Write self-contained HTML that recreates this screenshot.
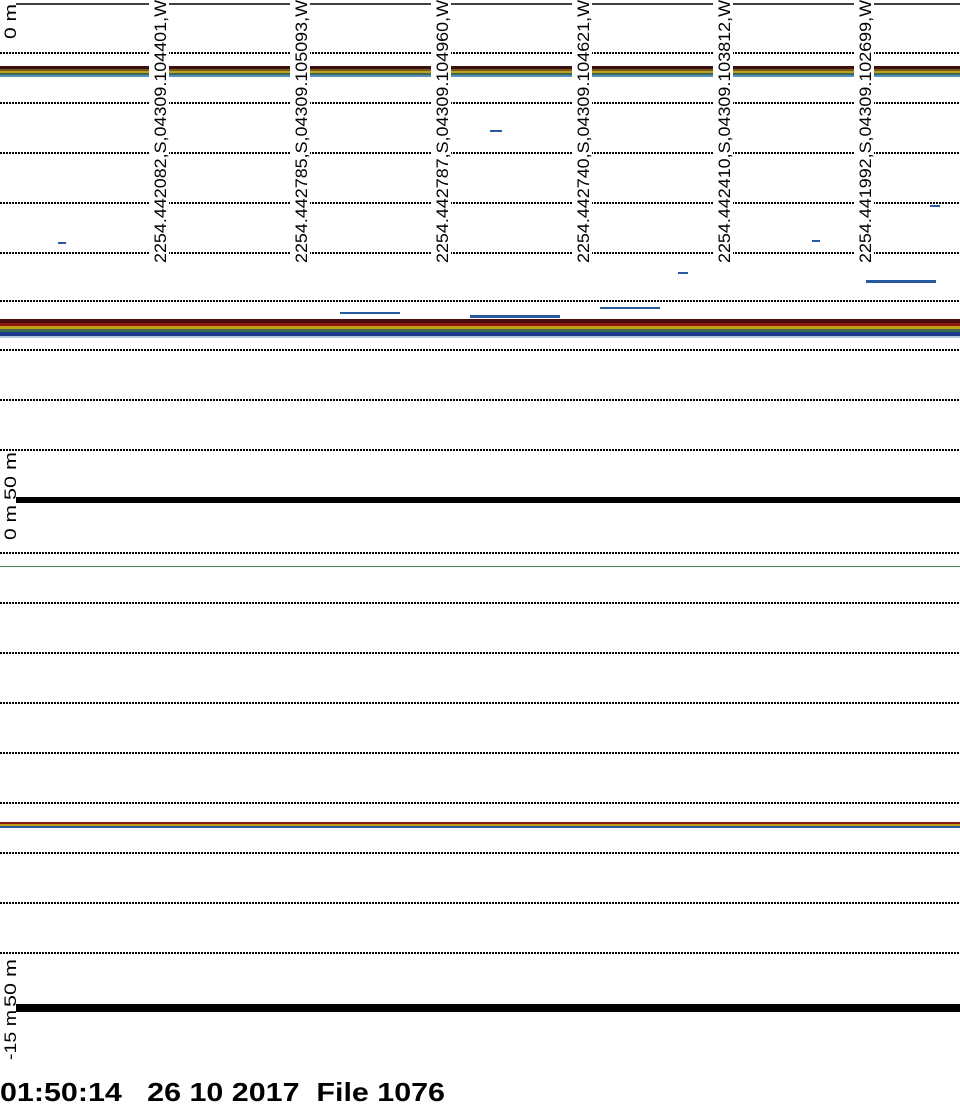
<!DOCTYPE html>
<html><head><meta charset="utf-8"><style>
html,body{margin:0;padding:0;background:#fff;width:960px;height:1108px;overflow:hidden}
svg{display:block}
text{font-family:"Liberation Sans",sans-serif}
</style></head><body>
<svg width="960" height="1108" viewBox="0 0 960 1108" xmlns="http://www.w3.org/2000/svg">
<defs>
<g id="dl"><line x1="0" x2="960" y1="0" y2="0" stroke="#000" stroke-width="2" stroke-dasharray="2 1"/></g>
</defs>
<line x1="16" x2="960" y1="4" y2="4" stroke="#000" stroke-width="1.5"/>
<use href="#dl" y="53"/><use href="#dl" y="103"/><use href="#dl" y="153"/><use href="#dl" y="203"/><use href="#dl" y="253"/><use href="#dl" y="301"/><use href="#dl" y="350"/><use href="#dl" y="400"/><use href="#dl" y="450"/>
<rect x="0" y="66" width="960" height="3" fill="#3a1010"/>
<rect x="0" y="69" width="960" height="2" fill="#7a5a1a"/>
<rect x="0" y="71" width="960" height="2" fill="#c0a020"/>
<rect x="0" y="73" width="960" height="2" fill="#3a6a50"/>
<rect x="0" y="75" width="960" height="2" fill="#5a90c0"/>
<rect x="0" y="319" width="960" height="4" fill="#4a0c0c"/>
<rect x="0" y="323" width="960" height="3" fill="#8a1a10"/>
<rect x="0" y="326" width="960" height="3" fill="#c0a010"/>
<rect x="0" y="329" width="960" height="3" fill="#3a6a4a"/>
<rect x="0" y="332" width="960" height="4" fill="#1a3a8a"/>
<rect x="0" y="336" width="960" height="2" fill="#6a90c8" opacity="0.5"/>
<g fill="#2a5aa0">
<rect x="490" y="130" width="12" height="2"/><rect x="150" y="170" width="10" height="2"/><rect x="58" y="242" width="8" height="2"/>
<rect x="812" y="240" width="8" height="2"/><rect x="930" y="205" width="10" height="2"/><rect x="678" y="272" width="10" height="2"/>
<rect x="866" y="280" width="70" height="3"/><rect x="340" y="312" width="60" height="2"/><rect x="470" y="315" width="90" height="3"/><rect x="600" y="307" width="60" height="2"/>
</g>
<rect x="16" y="497" width="944" height="6" fill="#000"/>
<use href="#dl" y="553"/><use href="#dl" y="603"/><use href="#dl" y="653"/><use href="#dl" y="703"/><use href="#dl" y="753"/><use href="#dl" y="803"/><use href="#dl" y="853"/><use href="#dl" y="903"/><use href="#dl" y="953"/>
<line x1="0" x2="960" y1="566.5" y2="566.5" stroke="#3a8a5a" stroke-width="1"/>
<rect x="0" y="822" width="960" height="2" fill="#8a1a10"/>
<rect x="0" y="824" width="960" height="2" fill="#c0a010"/>
<rect x="0" y="826" width="960" height="2" fill="#2a5aa0"/>
<rect x="16" y="1004" width="944" height="8" fill="#000"/>
<g font-size="17" fill="#000">
<rect x="149" y="0" width="20" height="264" fill="#fff"/><text transform="translate(166,263) rotate(-90)" textLength="263" lengthAdjust="spacingAndGlyphs">2254.442082,S,04309.104401,W</text>
<rect x="290" y="0" width="20" height="264" fill="#fff"/><text transform="translate(307,263) rotate(-90)" textLength="263" lengthAdjust="spacingAndGlyphs">2254.442785,S,04309.105093,W</text>
<rect x="431" y="0" width="20" height="264" fill="#fff"/><text transform="translate(448,263) rotate(-90)" textLength="263" lengthAdjust="spacingAndGlyphs">2254.442787,S,04309.104960,W</text>
<rect x="572" y="0" width="20" height="264" fill="#fff"/><text transform="translate(589,263) rotate(-90)" textLength="263" lengthAdjust="spacingAndGlyphs">2254.442740,S,04309.104621,W</text>
<rect x="713" y="0" width="20" height="264" fill="#fff"/><text transform="translate(730,263) rotate(-90)" textLength="263" lengthAdjust="spacingAndGlyphs">2254.442410,S,04309.103812,W</text>
<rect x="854" y="0" width="20" height="264" fill="#fff"/><text transform="translate(871,263) rotate(-90)" textLength="263" lengthAdjust="spacingAndGlyphs">2254.441992,S,04309.102699,W</text>
</g>
<g font-size="17" fill="#000">
<text transform="translate(16,39) rotate(-90)" textLength="35" lengthAdjust="spacingAndGlyphs">0 m</text>
<text transform="translate(16,500) rotate(-90)" textLength="48" lengthAdjust="spacingAndGlyphs">50 m</text>
<text transform="translate(16,540) rotate(-90)" textLength="35" lengthAdjust="spacingAndGlyphs">0 m</text>
<text transform="translate(16,1007) rotate(-90)" textLength="48" lengthAdjust="spacingAndGlyphs">50 m</text>
<text transform="translate(16,1060) rotate(-90)" textLength="50" lengthAdjust="spacingAndGlyphs">-15 m</text>
</g>
<text x="0" y="1101" font-size="26" font-weight="bold" xml:space="preserve" textLength="445" lengthAdjust="spacingAndGlyphs">01:50:14   26 10 2017  File 1076</text>
</svg>
</body></html>
